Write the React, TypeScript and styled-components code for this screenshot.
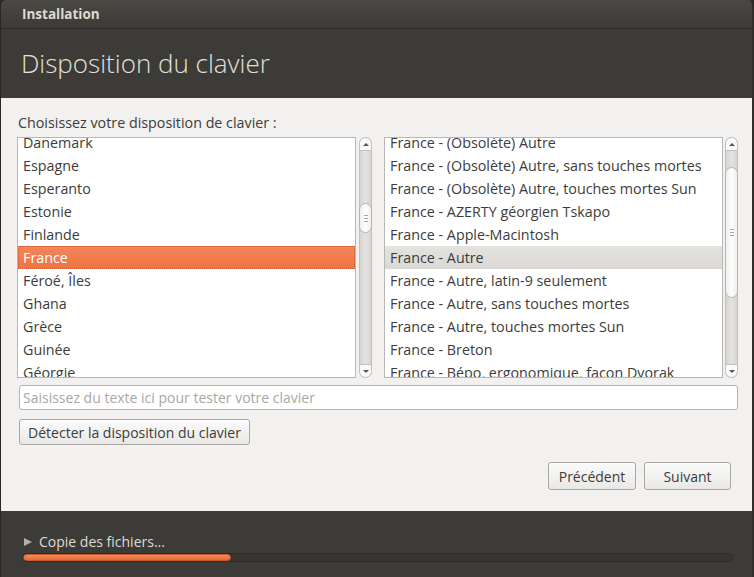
import React from "react";
import styled, { createGlobalStyle } from "styled-components";

const Global = createGlobalStyle`
  html, body { margin: 0; padding: 0; background: #2b2a27; }
  body { font-family: "Open Sans", "Noto Sans", "DejaVu Sans", sans-serif; }
  * { box-sizing: border-box; }
`;

const Window = styled.div`
  width: 754px;
  height: 577px;
  display: flex;
  flex-direction: column;
  background: #3c3b37;
  border-radius: 6px 6px 0 0;
  overflow: hidden;
  border-left: 1px solid #2a2624;
  border-right: 2px solid #2f2e2b;
`;

const TitleBar = styled.div`
  height: 29px;
  flex: none;
  display: flex;
  align-items: center;
  padding-left: 21px;
  background: linear-gradient(#4a4944, #3c3b37);
  border-bottom: 1px solid #2f2e2b;
  color: #dfdbd2;
  font-weight: 700;
  font-size: 13.5px;
`;

const Header = styled.div`
  height: 69px;
  flex: none;
  display: flex;
  align-items: center;
  padding-left: 20px;
  padding-bottom: 2px;
  color: #e3e0da;
  font-weight: 300;
  font-size: 26px;
`;

const Content = styled.div`
  flex: 1;
  background: #f2f1f0;
  padding: 16px 17px 0 16px;
  display: flex;
  flex-direction: column;
  color: #3c3c3c;
`;

const Label = styled.div`
  font-size: 14.3px;
  line-height: 18px;
  height: 23px;
  padding-left: 1px;
`;

const Lists = styled.div`
  display: grid;
  grid-template-columns: 355px 354px;
  grid-template-rows: 241px;
  column-gap: 12px;
  height: 241px;
  flex: none;
`;

const ListPane = styled.div<{ $gap: number }>`
  display: flex;
  gap: ${(p) => p.$gap}px;
  height: 241px;
  min-height: 0;
`;

const ListBox = styled.div`
  flex: 1;
  background: #ffffff;
  border: 1px solid #b9b7b3;
  overflow: hidden;
`;

const ListInner = styled.div`
  margin-top: -7px;
`;

const Row = styled.div<{ $sel?: "focus" | "dim" }>`
  height: 23px;
  font-size: 14.3px;
  white-space: nowrap;
  color: ${(p) => (p.$sel === "focus" ? "#ffffff" : "#3c3c3c")};
  background: ${(p) =>
    p.$sel === "focus"
      ? "linear-gradient(#f4855a, #ee7443)"
      : p.$sel === "dim"
      ? "linear-gradient(#e4e3e0, #d9d8d5)"
      : "transparent"};
  border: ${(p) => (p.$sel === "focus" ? "1px dotted #d15a2a" : "none")};
  padding-left: ${(p) => (p.$sel === "focus" ? "4px" : "5px")};
  line-height: ${(p) => (p.$sel === "focus" ? "21px" : "23px")};
`;

const Trough = styled.div`
  width: 13px;
  flex: none;
  position: relative;
  background: linear-gradient(90deg, #d6d5d3, #e4e3e1 50%, #d6d5d3);
  border: 1px solid #c2c0bd;
  border-radius: 7px;
`;

const Stepper = styled.div<{ $pos: "top" | "bottom" }>`
  position: absolute;
  left: -1px;
  right: -1px;
  ${(p) => (p.$pos === "top" ? "top: -1px;" : "bottom: -1px;")}
  height: 14px;
  background: #fbfbfb;
  border: 1px solid #c2c0bd;
  border-radius: ${(p) => (p.$pos === "top" ? "7px 7px 2px 2px" : "2px 2px 7px 7px")};
  display: flex;
  align-items: center;
  justify-content: center;
`;

const Arrow = styled.div<{ $dir: "up" | "down" }>`
  width: 0;
  height: 0;
  border-left: 3px solid transparent;
  border-right: 3px solid transparent;
  ${(p) =>
    p.$dir === "up"
      ? "border-bottom: 3px solid #555;"
      : "border-top: 3px solid #555;"}
`;

const Thumb = styled.div`
  position: absolute;
  left: -1px;
  right: -1px;
  background: linear-gradient(90deg, #f0efee, #fdfdfd 50%, #efeeed);
  border: 1px solid #b6b4b1;
  border-radius: 7px;
  display: flex;
  align-items: center;
  justify-content: center;
`;

const Grip = styled.div`
  width: 4px;
  height: 7px;
  background: repeating-linear-gradient(#a8a6a3 0 1px, transparent 1px 3px);
`;

const TextInput = styled.input`
  margin-top: 7px;
  height: 25px;
  width: 719px;
  margin-left: 2px;
  border: 1px solid #b5b3af;
  border-radius: 3px;
  background: #ffffff;
  padding: 0 3px;
  font-family: "Open Sans", "Noto Sans", sans-serif;
  font-size: 14px;
  color: #3c3c3c;
  outline: none;
  &::placeholder {
    color: #a9a7a3;
  }
`;

const Button = styled.button<{ $w: number; $h: number }>`
  width: ${(p) => p.$w}px;
  height: ${(p) => p.$h}px;
  border: 1px solid #a9a7a3;
  border-radius: 3px;
  background: linear-gradient(#fbfbfb, #e9e8e6);
  box-shadow: inset 0 1px 0 #ffffff;
  font-family: "Open Sans", "Noto Sans", sans-serif;
  font-size: 14px;
  color: #3c3c3c;
  padding: 0;
  cursor: default;
  white-space: nowrap;
`;

const DetectRow = styled.div`
  margin-top: 9px;
  padding-left: 2px;
  display: flex;
`;

const NavRow = styled.div`
  margin-top: 17px;
  display: flex;
  justify-content: flex-end;
  gap: 8px;
  padding-right: 4px;
`;

const Bottom = styled.div`
  height: 66px;
  flex: none;
  background: #3c3b37;
  padding: 20px 0 0 21px;
  display: flex;
  flex-direction: column;
`;

const Expander = styled.div`
  display: flex;
  align-items: center;
  gap: 7px;
  height: 21px;
  color: #dfdbd2;
  font-size: 14px;
  padding-left: 2px;
`;

const Triangle = styled.div`
  width: 0;
  height: 0;
  border-top: 4.5px solid transparent;
  border-bottom: 4.5px solid transparent;
  border-left: 8px solid #b3b1ac;
`;

const Track = styled.div`
  margin-top: 1px;
  width: 711px;
  height: 9px;
  border-radius: 5px;
  background: #363531;
  border: 1px solid #2c2b28;
  overflow: hidden;
  display: flex;
`;

const Fill = styled.div`
  height: 100%;
  border-radius: 4px;
  background: linear-gradient(#f58c5f, #e56a38);
  border: 1px solid #c95a2c;
`;

const leftItems = [
  "Danemark",
  "Espagne",
  "Esperanto",
  "Estonie",
  "Finlande",
  "France",
  "Féroé, Îles",
  "Ghana",
  "Grèce",
  "Guinée",
  "Géorgie",
];

const rightItems = [
  "France - (Obsolète) Autre",
  "France - (Obsolète) Autre, sans touches mortes",
  "France - (Obsolète) Autre, touches mortes Sun",
  "France - AZERTY géorgien Tskapo",
  "France - Apple-Macintosh",
  "France - Autre",
  "France - Autre, latin-9 seulement",
  "France - Autre, sans touches mortes",
  "France - Autre, touches mortes Sun",
  "France - Breton",
  "France - Bépo, ergonomique, façon Dvorak",
];

function Scrollbar({ top, height }: { top: number; height: number }) {
  return (
    <Trough>
      <Stepper $pos="top">
        <Arrow $dir="up" />
      </Stepper>
      <Thumb style={{ top, height }}>
        <Grip />
      </Thumb>
      <Stepper $pos="bottom">
        <Arrow $dir="down" />
      </Stepper>
    </Trough>
  );
}

export default function App() {
  return (
    <>
      <Global />
      <Window>
        <TitleBar>Installation</TitleBar>
        <Header>Disposition du clavier</Header>
        <Content>
          <Label>Choisissez votre disposition de clavier :</Label>
          <Lists>
            <ListPane $gap={3}>
              <ListBox>
                <ListInner>
                  {leftItems.map((t) => (
                    <Row key={t} $sel={t === "France" ? "focus" : undefined}>
                      {t}
                    </Row>
                  ))}
                </ListInner>
              </ListBox>
              <Scrollbar top={65} height={30} />
            </ListPane>
            <ListPane $gap={2}>
              <ListBox>
                <ListInner>
                  {rightItems.map((t) => (
                    <Row key={t} $sel={t === "France - Autre" ? "dim" : undefined}>
                      {t}
                    </Row>
                  ))}
                </ListInner>
              </ListBox>
              <Scrollbar top={29} height={131} />
            </ListPane>
          </Lists>
          <TextInput placeholder="Saisissez du texte ici pour tester votre clavier" />
          <DetectRow>
            <Button $w={231} $h={26}>Détecter la disposition du clavier</Button>
          </DetectRow>
          <NavRow>
            <Button $w={88} $h={28}>Précédent</Button>
            <Button $w={87} $h={28}>Suivant</Button>
          </NavRow>
        </Content>
        <Bottom>
          <Expander>
            <Triangle />
            Copie des fichiers...
          </Expander>
          <Track>
            <Fill style={{ width: 208 }} />
          </Track>
        </Bottom>
      </Window>
    </>
  );
}
